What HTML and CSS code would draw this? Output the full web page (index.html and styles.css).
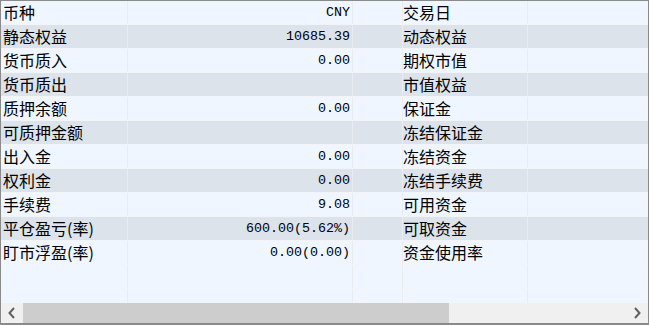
FILE: index.html
```html
<!DOCTYPE html>
<html lang="zh-CN">
<head>
<meta charset="utf-8">
<title>资金</title>
<link rel="stylesheet" href="styles.css">
</head>
<body>
<div class="panel">
  <div class="grid">
    <div class="row odd"><div class="c c1">币种</div><div class="c c2">CNY</div><div class="c c3"></div><div class="c c4">交易日</div><div class="c c5"></div></div>
    <div class="row even"><div class="c c1">静态权益</div><div class="c c2">10685.39</div><div class="c c3"></div><div class="c c4">动态权益</div><div class="c c5"></div></div>
    <div class="row odd"><div class="c c1">货币质入</div><div class="c c2">0.00</div><div class="c c3"></div><div class="c c4">期权市值</div><div class="c c5"></div></div>
    <div class="row even"><div class="c c1">货币质出</div><div class="c c2"></div><div class="c c3"></div><div class="c c4">市值权益</div><div class="c c5"></div></div>
    <div class="row odd"><div class="c c1">质押余额</div><div class="c c2">0.00</div><div class="c c3"></div><div class="c c4">保证金</div><div class="c c5"></div></div>
    <div class="row even"><div class="c c1">可质押金额</div><div class="c c2"></div><div class="c c3"></div><div class="c c4">冻结保证金</div><div class="c c5"></div></div>
    <div class="row odd"><div class="c c1">出入金</div><div class="c c2">0.00</div><div class="c c3"></div><div class="c c4">冻结资金</div><div class="c c5"></div></div>
    <div class="row even"><div class="c c1">权利金</div><div class="c c2">0.00</div><div class="c c3"></div><div class="c c4">冻结手续费</div><div class="c c5"></div></div>
    <div class="row odd"><div class="c c1">手续费</div><div class="c c2">9.08</div><div class="c c3"></div><div class="c c4">可用资金</div><div class="c c5"></div></div>
    <div class="row even"><div class="c c1">平仓盈亏(率)</div><div class="c c2">600.00(5.62%)</div><div class="c c3"></div><div class="c c4">可取资金</div><div class="c c5"></div></div>
    <div class="row odd"><div class="c c1">盯市浮盈(率)</div><div class="c c2">0.00(0.00)</div><div class="c c3"></div><div class="c c4">资金使用率</div><div class="c c5"></div></div>
    <div class="row odd"><div class="c c1"></div><div class="c c2"></div><div class="c c3"></div><div class="c c4"></div><div class="c c5"></div></div>
    <div class="row odd"><div class="c c1"></div><div class="c c2"></div><div class="c c3"></div><div class="c c4"></div><div class="c c5"></div></div>
  </div>
  <div class="hscroll">
    <div class="arrow">
      <svg width="10" height="12" viewBox="0 0 10 12"><path d="M7 1 L2.5 6 L7 11" fill="none" stroke="#606060" stroke-width="2"/></svg>
    </div>
    <div class="track"><div class="thumb"></div></div>
    <div class="arrow">
      <svg width="10" height="12" viewBox="0 0 10 12"><path d="M3 1 L7.5 6 L3 11" fill="none" stroke="#606060" stroke-width="2"/></svg>
    </div>
  </div>
</div>
</body>
</html>
```

FILE: styles.css
```css
html, body {
  margin: 0;
  padding: 0;
  background: #ffffff;
}

.panel {
  width: 649px;
  height: 325px;
  box-sizing: border-box;
  border: 1px solid #8a8a8a;
  border-bottom-width: 2px;
  display: flex;
  flex-direction: column;
  background: #eff6ff;
  overflow: hidden;
}

.grid {
  height: 302px;
  overflow: hidden;
  flex: none;
}

.row {
  display: flex;
  height: 23px;
  border-bottom: 1px solid #f2f4f7;
}

.row.odd { background: #eff6ff; }
.row.even { background: #dde3ea; }

.c {
  box-sizing: border-box;
  height: 23px;
  line-height: 23px;
  border-right: 1px solid #e9edf2;
  font-family: "Noto Sans CJK SC", "Noto Sans", sans-serif;
  font-size: 16px;
  color: #000000;
  white-space: nowrap;
  overflow: hidden;
  flex: none;
}

.c1 { width: 127px; padding-left: 2px; }
.c2 {
  width: 225px;
  text-align: right;
  padding-right: 2px;
  font-family: "Liberation Mono", "DejaVu Sans Mono", monospace;
  font-size: 13.33px;
}
.c3 { width: 50px; }
.c4 { width: 125px; padding-left: 0; }
.c5 { flex: 1; border-right: none; }

.hscroll {
  height: 20px;
  flex: none;
  display: flex;
  background: #f0f0f0;
}

.arrow {
  width: 22px;
  display: flex;
  align-items: center;
  justify-content: center;
  flex: none;
}

.track {
  flex: 1;
  display: flex;
}

.thumb {
  width: 426px;
  background: #cdcdcd;
}
```
